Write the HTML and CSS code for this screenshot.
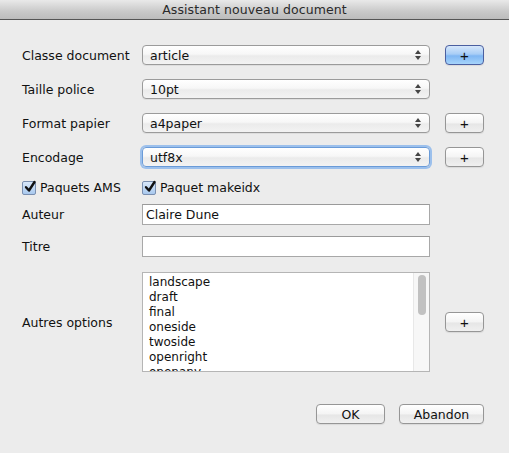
FILE: index.html
```html
<!DOCTYPE html>
<html>
<head>
<meta charset="utf-8">
<link rel="stylesheet" href="styles.css">
</head>
<body>
<div class="window">
  <div class="titlebar">Assistant nouveau document</div>
  <div class="form">
    <div class="row r-combo first">
      <span class="label">Classe document</span>
      <div class="combo"><span>article</span><span class="arrows"><i class="up"></i><i class="down"></i></span></div>
      <button class="plus default">+</button>
    </div>
    <div class="row r-combo">
      <span class="label">Taille police</span>
      <div class="combo"><span>10pt</span><span class="arrows"><i class="up"></i><i class="down"></i></span></div>
    </div>
    <div class="row r-combo">
      <span class="label">Format papier</span>
      <div class="combo"><span>a4paper</span><span class="arrows"><i class="up"></i><i class="down"></i></span></div>
      <button class="plus">+</button>
    </div>
    <div class="row r-combo">
      <span class="label">Encodage</span>
      <div class="combo focus"><span>utf8x</span><span class="arrows"><i class="up"></i><i class="down"></i></span></div>
      <button class="plus">+</button>
    </div>
    <div class="row r-check">
      <label class="check"><span class="box"><svg viewBox="0 0 14 14" width="14" height="14"><path d="M3 7.2 L6 10.5 L11.5 2" fill="none" stroke="#111" stroke-width="2.4" stroke-linecap="round" stroke-linejoin="round"/></svg></span>Paquets AMS</label>
      <label class="check"><span class="box"><svg viewBox="0 0 14 14" width="14" height="14"><path d="M3 7.2 L6 10.5 L11.5 2" fill="none" stroke="#111" stroke-width="2.4" stroke-linecap="round" stroke-linejoin="round"/></svg></span>Paquet makeidx</label>
    </div>
    <div class="row r-text auteur">
      <span class="label">Auteur</span>
      <div class="textfield">Claire Dune</div>
    </div>
    <div class="row r-text titre">
      <span class="label">Titre</span>
      <div class="textfield"></div>
    </div>
    <div class="row r-list">
      <span class="label">Autres options</span>
      <div class="listbox">
        <div class="items">
          <div>landscape</div>
          <div>draft</div>
          <div>final</div>
          <div>oneside</div>
          <div>twoside</div>
          <div>openright</div>
          <div>openany</div>
        </div>
        <div class="scrollbar"><div class="thumb"></div></div>
      </div>
      <button class="plus">+</button>
    </div>
    <div class="footer">
      <button class="btn ok">OK</button>
      <button class="btn cancel">Abandon</button>
    </div>
  </div>
</div>
</body>
</html>
```

FILE: styles.css
```css
html, body {
  margin: 0;
  padding: 0;
  background: #ececec;
}
body {
  font-family: "DejaVu Sans", "Liberation Sans", sans-serif;
  font-size: 12px;
  color: #111;
  width: 509px;
  height: 453px;
  overflow: hidden;
}
.window {
  width: 509px;
  height: 453px;
  background: #ececec;
}
.titlebar {
  height: 19px;
  line-height: 20px;
  text-align: center;
  font-size: 12.5px;
  color: #2a2a2a;
  background: linear-gradient(#e9e9e9, #c9c9c9 60%, #bcbcbc);
  border-bottom: 1px solid #555;
  letter-spacing: 0.1px;
}
.form {
  display: flex;
  flex-direction: column;
  padding: 25px 25px 0 22px;
}
.row {
  display: grid;
  grid-template-columns: 120px 288px 54px;
  column-gap: 0;
  align-items: center;
}
.label {
  font-size: 12.5px;
  color: #111;
  white-space: nowrap;
}
.r-combo {
  height: 20px;
  margin-top: 14px;
}
.r-combo.first {
  margin-top: 0;
}
.combo {
  height: 18px;
  border: 1px solid #9b9b9b;
  border-radius: 4px;
  background: linear-gradient(#ffffff, #f7f7f7 45%, #ebebeb 55%, #f3f3f3);
  display: flex;
  align-items: center;
  justify-content: space-between;
  padding: 0 8px 0 7px;
  font-size: 12.5px;
  box-shadow: 0 1px 0 rgba(0,0,0,0.06);
}
.combo.focus {
  border-color: #6a9bd8;
  box-shadow: 0 0 0 2px #9cc0ec;
}
.arrows {
  display: flex;
  flex-direction: column;
  gap: 2px;
  align-items: center;
}
.arrows i {
  display: block;
  width: 0;
  height: 0;
  border-left: 3px solid transparent;
  border-right: 3px solid transparent;
}
.arrows .up {
  border-bottom: 4px solid #444;
}
.arrows .down {
  border-top: 4px solid #444;
}
.plus {
  justify-self: end;
  height: 20px;
  width: 39px;
  padding: 0;
  margin: 0;
  border: 1px solid #969696;
  border-radius: 4px;
  background: linear-gradient(#ffffff, #f4f4f4 50%, #e6e6e6 55%, #f0f0f0);
  font-family: "Liberation Sans", sans-serif;
  font-size: 15px;
  line-height: 17px;
  color: #111;
  box-shadow: 0 1px 1px rgba(0,0,0,0.08);
}
.plus.default {
  border-color: #4b5fa0;
  background: linear-gradient(#d6e7fb, #a8cdf6 45%, #7fb6f3 55%, #a6d4fb);
}
.r-check {
  height: 14px;
  margin-top: 13px;
}
.check {
  display: flex;
  align-items: center;
  gap: 4px;
  font-size: 12.5px;
  white-space: nowrap;
}
.box {
  width: 12px;
  height: 12px;
  border: 1px solid #7a8fb0;
  border-radius: 2px;
  background: linear-gradient(#d9e8fa, #a9c9ee);
  position: relative;
  flex: none;
}
.box svg {
  position: absolute;
  left: 0;
  top: -2px;
}
.r-text {
  height: 21px;
}
.auteur {
  margin-top: 10px;
}
.titre {
  margin-top: 11px;
}
.textfield {
  height: 19px;
  border: 1px solid #a8a8a8;
  border-top-color: #9a9a9a;
  background: #fff;
  font-size: 12.5px;
  line-height: 19px;
  padding-left: 3px;
}
.r-list {
  height: 100px;
  margin-top: 15px;
}
.listbox {
  height: 98px;
  border: 1px solid #b5b5b5;
  background: #fff;
  display: flex;
  overflow: hidden;
}
.items {
  flex: 1;
  padding: 2px 0 0 6px;
  font-size: 12px;
  line-height: 15px;
  overflow: hidden;
}
.scrollbar {
  width: 15px;
  border-left: 1px solid #e8e8e8;
  background: #f7f7f7;
  display: flex;
  justify-content: center;
  padding-top: 2px;
}
.thumb {
  width: 8px;
  height: 40px;
  border-radius: 4px;
  background: #c1c1c1;
}
.footer {
  display: flex;
  justify-content: flex-end;
  gap: 14px;
  margin-top: 32px;
}
.btn {
  height: 20px;
  padding: 0;
  margin: 0;
  border: 1px solid #969696;
  border-radius: 4px;
  background: linear-gradient(#ffffff, #f4f4f4 50%, #e6e6e6 55%, #f0f0f0);
  font-family: "DejaVu Sans", sans-serif;
  font-size: 12.5px;
  color: #111;
  box-shadow: 0 1px 1px rgba(0,0,0,0.08);
}
.ok {
  width: 69px;
}
.cancel {
  width: 85px;
}
```
